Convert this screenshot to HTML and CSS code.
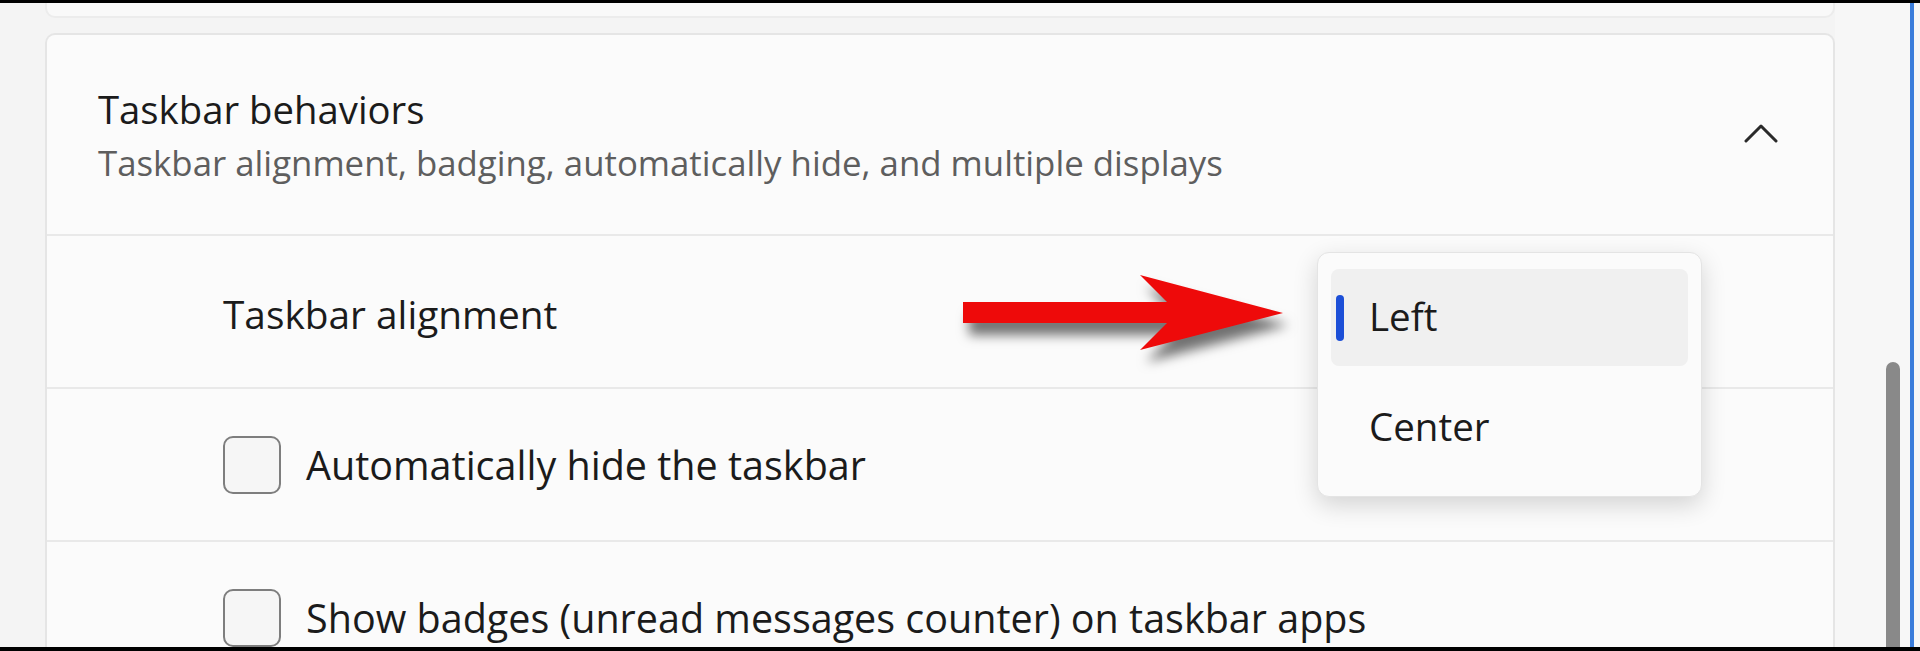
FILE: index.html
```html
<!DOCTYPE html>
<html lang="en">
<head>
    <meta charset="UTF-8">
    <meta name="viewport" content="width=device-width, initial-scale=1.0">
    <title>Taskbar behaviors</title>
    <link rel="stylesheet" href="styles.css">
</head>
<body>
    <div class="screen">
        <main class="page">
            <div class="prev-card"></div>

            <section class="expander">
                <header class="expander-head">
                    <div class="head-text">
                        <div class="head-title">Taskbar behaviors</div>
                        <div class="head-desc">Taskbar alignment, badging, automatically hide, and multiple displays</div>
                    </div>
                    <svg class="chevron" width="34" height="20" viewBox="0 0 34 20">
                        <polyline points="2,18 17,3 32,18" fill="none" stroke="#2a2a2a" stroke-width="3" stroke-linecap="round" stroke-linejoin="round"/>
                    </svg>
                </header>

                <div class="setting-row row-align">
                    <span class="setting-label">Taskbar alignment</span>
                </div>
                <div class="setting-row">
                    <span class="checkbox"></span>
                    <span class="setting-label">Automatically hide the taskbar</span>
                </div>
                <div class="setting-row">
                    <span class="checkbox"></span>
                    <span class="setting-label">Show badges (unread messages counter) on taskbar apps</span>
                </div>
            </section>
        </main>

        <div class="scroll-col">
            <div class="scroll-thumb"></div>
        </div>
        <div class="window-edge"></div>

        <!-- red callout arrow pointing at the menu -->
        <svg class="callout-arrow" width="350" height="115" viewBox="0 0 350 115">
            <polygon points="13,41 217,41 190,14 333,52 190,89 217,62 13,62" fill="#ee0a0a"/>
        </svg>

        <!-- open alignment menu -->
        <div class="dropdown">
            <div class="dd-item selected">Left</div>
            <div class="dd-item">Center</div>
        </div>
    </div>
</body>
</html>
```

FILE: styles.css
```css
body {
    margin: 0;
    padding: 0;
    height: 651px;
    overflow: hidden;
    background-color: #000;
    font-family: "Open Sans", "Noto Sans", sans-serif;
    color: #1b1b1b;
}

.screen {
    position: relative;
    margin-top: 3px;
    height: 644px;
    display: flex;
    background-color: #f4f4f4;
    overflow: hidden;
}

.page {
    flex: none;
    width: 1835px;
    padding-left: 45px;
    box-sizing: border-box;
}

/* bottom edge of the card above */
.prev-card {
    height: 13px;
    background-color: #f9f9f9;
    border: 2px solid #ececec;
    border-top: none;
    border-radius: 0 0 10px 10px;
}

.expander {
    margin-top: 15px;
    height: 640px;
    background-color: #fbfbfb;
    border: 2px solid #e5e5e5;
    border-bottom: none;
    border-radius: 10px 10px 0 0;
}

.expander-head {
    height: 199px;
    display: flex;
    align-items: center;
    padding: 0 55px 0 51px;
    border-bottom: 2px solid #e9e9e9;
}

.head-text {
    flex: 1;
}

.head-title {
    font-size: 38.3px;
    line-height: 50px;
    color: #1b1b1b;
}

.head-desc {
    margin-top: 7px;
    font-size: 34.8px;
    line-height: 44px;
    color: #5e5e5e;
}

.chevron {
    margin-bottom: 4px;
}

.setting-row {
    height: 151px;
    display: flex;
    align-items: center;
    gap: 25px;
    padding-left: 176px;
    border-bottom: 2px solid #e9e9e9;
}

.row-align {
    padding-top: 5px;
    height: 146px;
}

.setting-label {
    font-size: 39.5px;
    line-height: 50px;
}

.row-align .setting-label {
    font-size: 38.8px;
}

.checkbox {
    width: 54px;
    height: 54px;
    border: 2px solid #7e7e7e;
    border-radius: 10px;
    background-color: #f6f6f6;
}

.scroll-col {
    flex: none;
    width: 75px;
    padding-top: 359px;
    box-sizing: border-box;
    display: flex;
    flex-direction: column;
    background-color: #f7f7f7;
}

.scroll-thumb {
    flex: 1;
    width: 14px;
    margin-left: 51px;
    border-radius: 7px 7px 0 0;
    background-color: #898989;
}

.window-edge {
    flex: none;
    width: 4px;
    background-color: #3b7ddb;
    border-right: 6px solid #f7f7f7;
}

.callout-arrow {
    position: absolute;
    left: 950px;
    top: 258px;
    filter: drop-shadow(6px 12px 6px rgba(0, 0, 0, 0.55));
}

.dropdown {
    position: absolute;
    left: 1317px;
    top: 249px;
    width: 385px;
    height: 245px;
    box-sizing: border-box;
    padding: 16px 13px;
    display: flex;
    flex-direction: column;
    gap: 13px;
    background-color: #fbfbfb;
    border: 1px solid #e4e4e4;
    border-radius: 12px;
    box-shadow: 0 8px 24px rgba(0, 0, 0, 0.16);
}

.dd-item {
    height: 97px;
    flex: none;
    box-sizing: border-box;
    display: flex;
    align-items: center;
    padding-left: 5px;
    padding-bottom: 4px;
    border-radius: 8px;
    font-size: 38.5px;
    line-height: 50px;
}

.dd-item::before {
    content: "";
    width: 8px;
    height: 46px;
    margin-top: 4px;
    margin-right: 25px;
    border-radius: 4px;
}

.dd-item.selected {
    background-color: #f0f0f0;
}

.dd-item.selected::before {
    background-color: #1c4fd7;
}
```
